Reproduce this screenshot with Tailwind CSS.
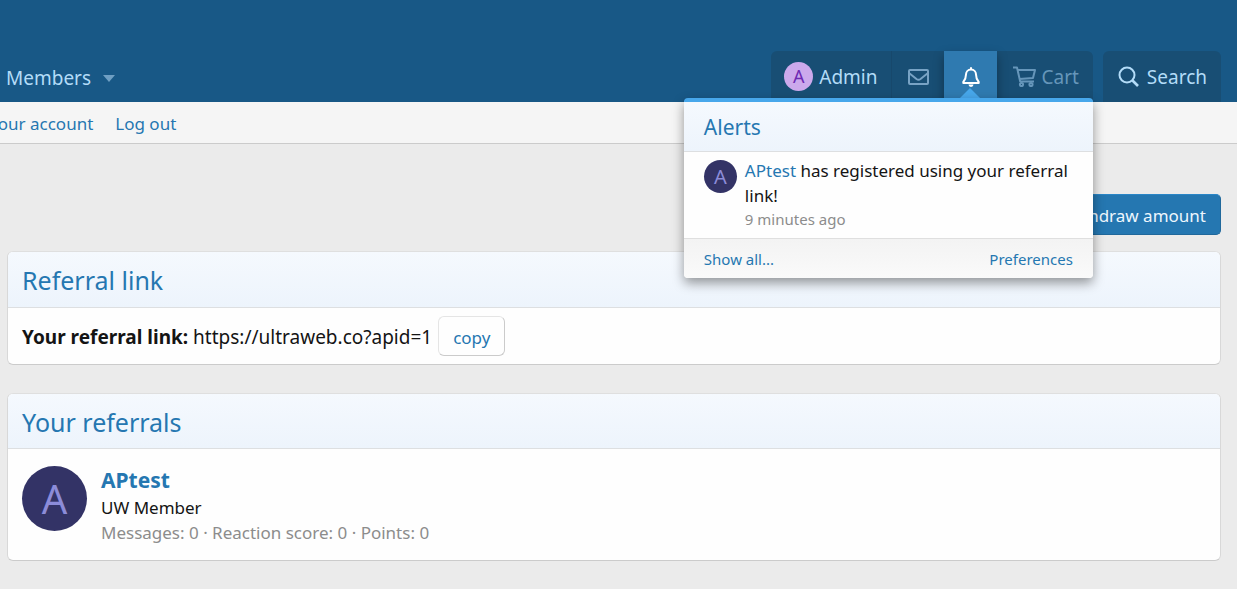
<!DOCTYPE html>
<html lang="en">

<head>
    <meta charset="UTF-8">
    <meta name="viewport" content="width=device-width, initial-scale=1.0">
    <script src="https://cdn.jsdelivr.net/npm/@tailwindcss/browser@4"></script>
    <title>Referrals</title>
</head>

<body class="min-h-screen bg-[#ebebeb] font-['Noto_Sans',sans-serif] text-[#141414] overflow-x-hidden">
    <header class="bg-[#185886] pt-[51px] pl-[6px] pr-4 flex justify-between">
        <nav class="flex items-center gap-3 pt-1 text-[19px] text-[#b3dcf8]">
            <a href="#">Members</a>
            <button type="button" aria-label="Toggle expanded">
                <svg class="w-3 h-[7px]" viewBox="0 0 12 7" fill="#6f9fc3"><path d="M0 0h12L6 7z" /></svg>
            </button>
        </nav>

        <div class="flex gap-[10px] text-[19px] text-[#b3dcf8]">
            <div class="relative flex h-[51px] rounded-t-md bg-[#184e74]">
                <a href="#" class="flex items-center gap-[6px] pl-[13px] pr-[14px] border-r border-[#17486c]">
                    <span class="w-[29px] h-[29px] rounded-full bg-[#cca9ec] text-[#6f29b3] text-[18px] flex items-center justify-center">A</span>
                    <span class="pt-[2px]">Admin</span>
                </a>
                <a href="#" aria-label="Conversations" class="w-[52px] flex items-center justify-center text-[#78a3c5]">
                    <svg class="w-[21px] h-[16px]" viewBox="0 0 21 16" fill="none" stroke="currentColor" stroke-width="2"><rect x="1" y="1" width="19" height="14" rx="1" /><path d="M1 4l7.500 6q2 1.500 4 0L20 4" /></svg>
                </a>
                <a href="#" aria-label="Alerts" class="relative w-[53px] flex items-center justify-center bg-[#2f7ab0] text-white shadow-[0_5px_10px_0_rgba(0,0,0,0.35)]">
                    <svg class="w-[18px] h-[20px]" viewBox="0 0 18 20" fill="none" stroke="currentColor" stroke-width="2" stroke-linejoin="round"><path d="M9 2.500C5.800 2.500 4 5 4 7.500c0 4-1 5.500-2.700 7.500V16h15.400v-1C15 13 14 11.500 14 7.500c0-2.500-1.800-5-5-5z" /><path d="M9 .2v2.500" /><path d="M6.500 17.500h5a2.500 2.500 0 0 1-5 0z" fill="currentColor" stroke="none" /></svg>
                    <svg class="absolute bottom-1 left-4 w-5 h-[10px]" viewBox="0 0 20 10" fill="#47a7eb"><path d="M10 0l10 10H0z" /></svg>
                </a>
                <a href="#" class="flex items-center gap-1 pl-4 pr-[14px] text-[#6696ba]">
                    <svg class="w-6 h-[21px]" viewBox="0 0 24 21" fill="none" stroke="currentColor" stroke-width="2" stroke-linejoin="round"><path d="M0 1.500h4L7.200 15.500H21M5 4h17L20 12 6.500 13" /><circle cx="8.500" cy="18.500" r="1.600" /><circle cx="18" cy="18.500" r="1.600" /></svg>
                    <span class="pt-[2px]">Cart</span>
                </a>

                <!-- alerts menu -->
                <section class="absolute z-10 right-0 top-[47px] w-[409px] border-t-4 border-[#47a7eb] rounded-[4px] bg-[#fefefe] text-[#141414] shadow-[0_5px_12px_0_rgba(0,0,0,0.4)] overflow-hidden">
                    <h3 class="h-[50px] px-5 pt-[3px] flex items-center text-[21px] text-[#2577b1] bg-linear-to-b from-[#f5f9fe] to-[#edf4fc] border-b border-[#dddfe1]">Alerts</h3>
                    <div class="flex gap-2 px-5 pt-2 pb-[7px]">
                        <a href="#" class="w-[33px] h-[33px] shrink-0 rounded-full bg-[#333366] text-[#8c8cd9] text-[20px] flex items-center justify-center">A</a>
                        <div class="-mt-[2px] text-[17px] leading-[25px]">
                            <p><a href="#" class="text-[#2577b1]">APtest</a> has registered using your referral link!</p>
                            <time class="block text-[15px] leading-[23px] text-[#8c8c8c]">9 minutes ago</time>
                        </div>
                    </div>
                    <div class="h-10 px-5 pt-[2px] flex items-center justify-between text-[15px] text-[#2577b1] bg-linear-to-b from-[#f3f3f3] to-[#fafafa] border-t border-[#dfdfdf]">
                        <a href="#">Show all...</a>
                        <a href="#">Preferences</a>
                    </div>
                </section>
            </div>

            <a href="#" class="flex items-center gap-[7px] pl-[15px] pr-[14px] rounded-t-md bg-[#184e74]">
                <svg class="w-[22px] h-[22px]" viewBox="0 0 22 22" fill="none" stroke="currentColor" stroke-width="2"><circle cx="9" cy="9" r="7.500" /><path d="M14.500 14.500l5.500 5.500" stroke-width="2.600" /></svg>
                <span class="pt-[2px]">Search</span>
            </a>
        </div>
    </header>

    <nav class="h-[42px] -ml-[11px] pt-[2px] flex items-center gap-[22px] bg-[#f5f5f5] border-b border-[#cbcbcb] text-[17px] text-[#2577b1]">
        <a href="#">Your account</a>
        <a href="#">Log out</a>
    </nav>

    <main class="pl-[7px] pr-4 pt-[50px] pb-7">
        <div class="flex justify-end">
            <button type="button" class="h-[41px] px-[14px] pt-[2px] rounded-[5px] bg-[#2577b1] border border-t-[#2a86c7] border-r-[#20689b] border-b-[#20689b] border-l-[#2a86c7] text-[17px] text-[#edf6fd]">Withdraw amount</button>
        </div>

        <section class="mt-4 bg-[#fefefe] border border-t-[#dfdfdf] border-x-[#d8d8d8] border-b-[#cbcbcb] rounded-md overflow-hidden">
            <h2 class="h-14 px-[14px] pt-[3px] flex items-center text-[25px] text-[#2577b1] bg-linear-to-b from-[#f5f9fe] to-[#edf4fc] border-b border-[#dddfe1]">Referral link</h2>
            <div class="h-14 px-[14px] flex items-center gap-[6px] text-[19px]">
                <p class="pt-[2px]"><b>Your referral link:</b> https://ultraweb.co?apid=1</p>
                <button type="button" class="h-10 px-[14px] pt-[3px] rounded-md border border-t-[#e5e5e5] border-l-[#e5e5e5] border-r-[#cbcbcb] border-b-[#cbcbcb] text-[17px] text-[#2577b1]">copy</button>
            </div>
        </section>

        <section class="mt-7 bg-[#fefefe] border border-t-[#dfdfdf] border-x-[#d8d8d8] border-b-[#cbcbcb] rounded-md overflow-hidden">
            <h2 class="h-[55px] px-[14px] pt-[3px] flex items-center text-[25px] text-[#2577b1] bg-linear-to-b from-[#f5f9fe] to-[#edf4fc] border-b border-[#dddfe1]">Your referrals</h2>
            <div class="flex gap-[14px] px-[14px] pt-[17px] pb-[14px]">
                <a href="#" class="w-[65px] h-[65px] shrink-0 rounded-full bg-[#333366] text-[#8c8cd9] text-[40px] flex items-center justify-center">A</a>
                <div class="-mt-px pb-px text-[17px] leading-[25px]">
                    <h3 class="text-[21px] leading-[30px] font-bold"><a href="#" class="text-[#2577b1]">APtest</a></h3>
                    <p>UW Member</p>
                    <p class="text-[#8c8c8c]">Messages: 0 · Reaction score: 0 · Points: 0</p>
                </div>
            </div>
        </section>
    </main>
</body>

</html>
